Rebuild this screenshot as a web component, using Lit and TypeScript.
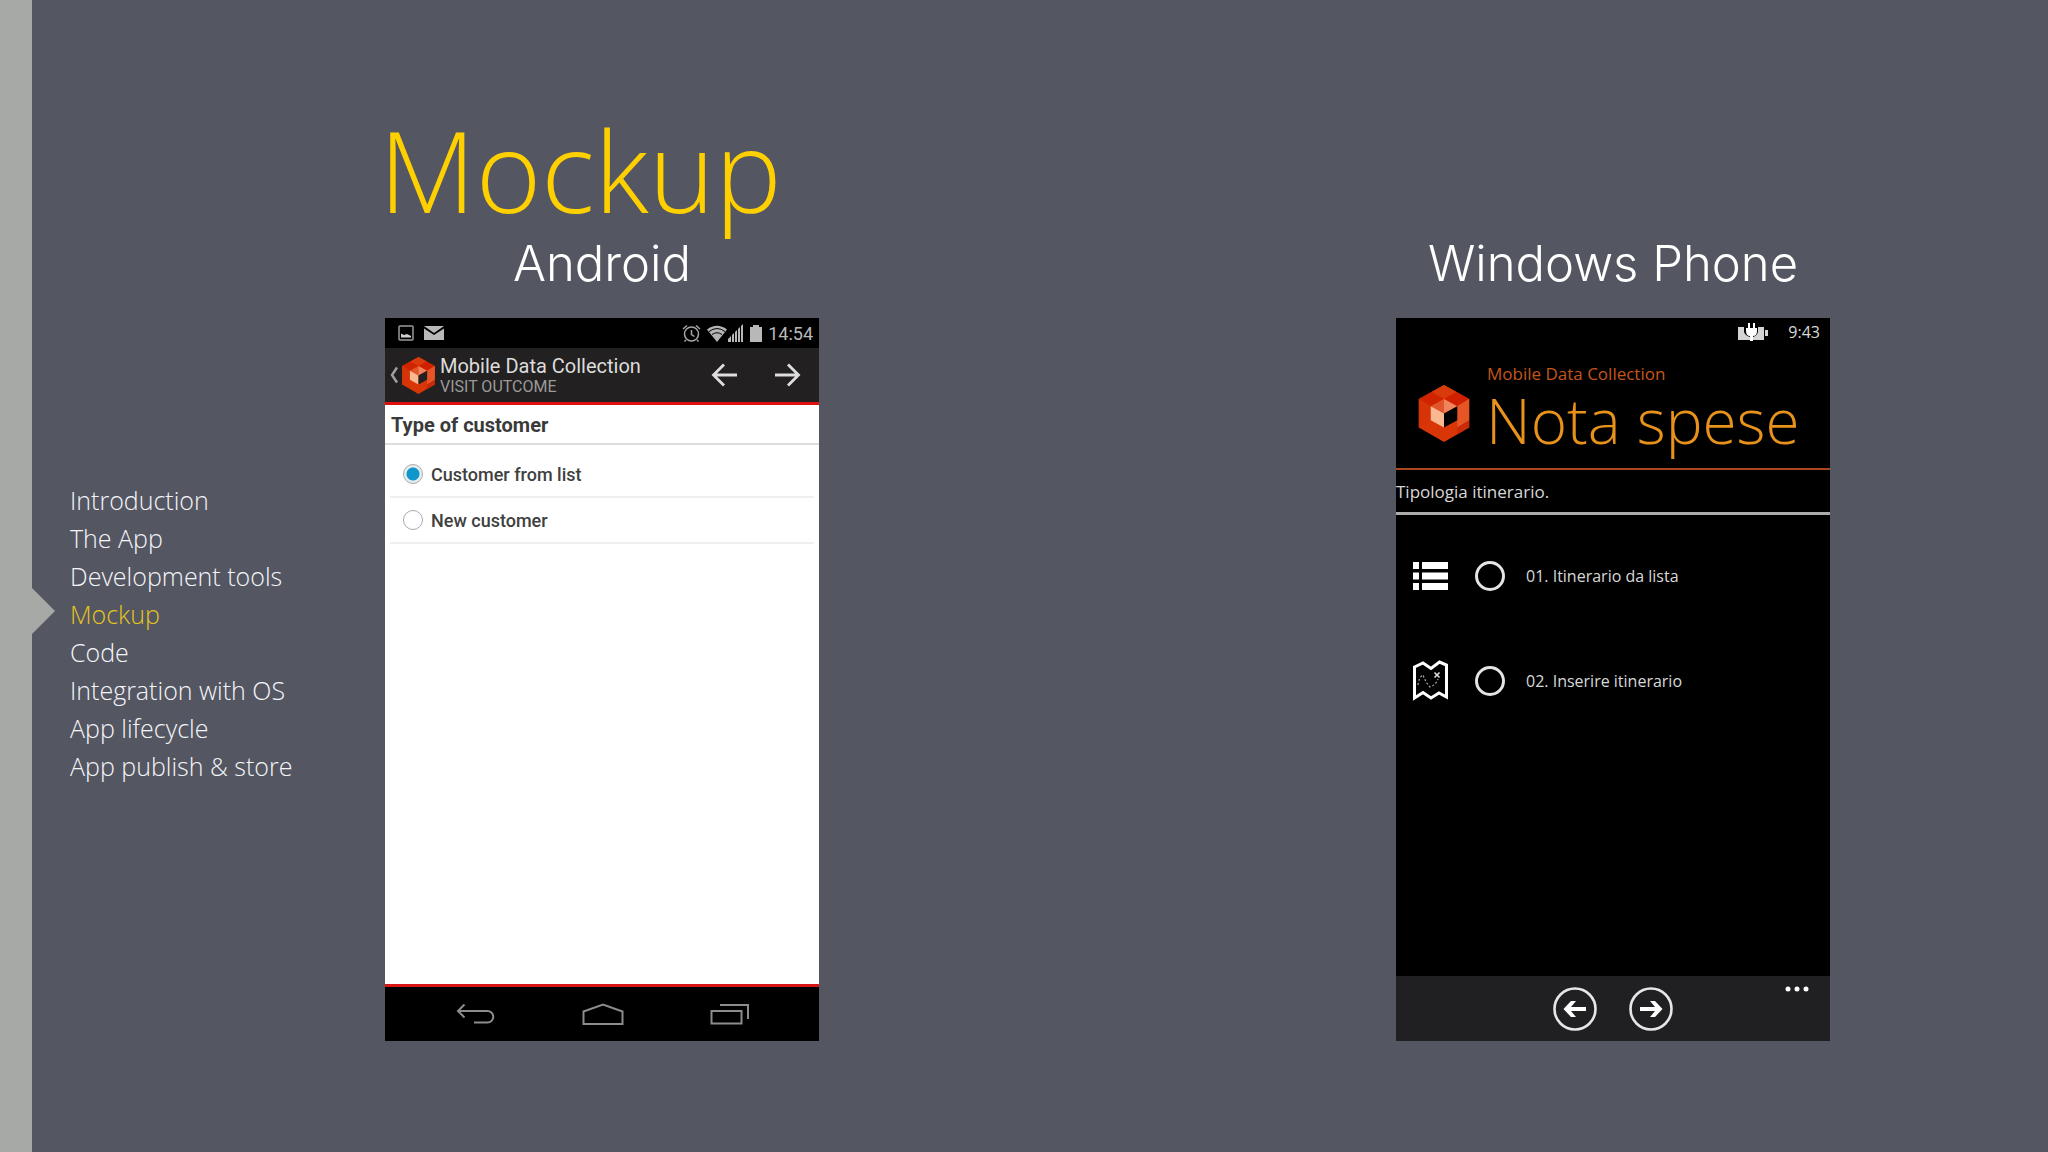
import { LitElement, html, css, svg } from "lit";
import { customElement, property, state } from "lit/decorators.js";
import { classMap } from "lit/directives/class-map.js";

const SECTIONS = [
  "Introduction",
  "The App",
  "Development tools",
  "Mockup",
  "Code",
  "Integration with OS",
  "App lifecycle",
  "App publish & store",
];

const cube = (hole: string) => svg`
  <path d="M38 0 76 21V64L38 86 0 64V21Z" fill="#d93608" />
  <path d="M38 0 57 10.500 38 21 19 10.500Z" fill="#d83a0c" />
  <path d="M57 10.500 76 21 57 32 38 21Z" fill="#d02000" />
  <path d="M19 10.500 38 21 18 32 0 21Z" fill="#d02400" />
  <path d="M0 21 18 32V53L0 64Z" fill="#d63406" />
  <path d="M76 21V53L58 64V32Z" fill="#e65526" />
  <path d="M76 53V64L57 75 58 64Z" fill="#c92a08" />
  <path d="M38 21 18 32 38 43Z" fill="#e2562c" />
  <path d="M38 21 58 32 38 43Z" fill="#f0845c" />
  <path d="M18 32 38 43V64L18 53Z" fill="#fab892" />
  <path d="M58 32V53L38 64V43Z" fill=${hole} />
`;

@customElement("cube-logo")
export class CubeLogo extends LitElement {
  @property() hole = "#000";

  static styles = css`
    :host { display: block; flex: none; }
    svg { display: block; width: 100%; height: 100%; }
  `;

  render() {
    return html`<svg viewBox="0 0 76 86" aria-hidden="true">${cube(this.hole)}</svg>`;
  }
}

@customElement("android-screen")
export class AndroidScreen extends LitElement {
  @state() private choice = 0;

  static styles = css`
    :host {
      display: flex;
      flex-direction: column;
      background: #fff;
      font-family: Roboto, sans-serif;
      font-weight: 400;
    }
    svg { display: block; fill: none; }
    .solid { fill: #b8b8b8; }
    button { border: 0; padding: 0; background: none; color: inherit; }
    .status {
      display: flex;
      align-items: center;
      height: 30px;
      padding: 0 6px 0 13px;
      background: #000;
      color: #b9b9b9;
      font-size: 18px;
    }
    .notices, .signals { display: flex; align-items: center; }
    .notices { gap: 10px; }
    .signals { margin-left: auto; gap: 6px; }
    .pair { display: flex; align-items: center; gap: 1px; }
    .action {
      display: flex;
      align-items: center;
      height: 54px;
      padding: 0 18px 0 5px;
      background: #222020;
      border-bottom: 3px solid #e01010;
      color: #dcdcdc;
    }
    .up { display: flex; align-items: center; }
    .logo { width: 37px; height: 37px; }
    .names { display: flex; flex-direction: column; margin-left: 3px; }
    .app { font-size: 20px; line-height: 22px; }
    .page { font-size: 16px; line-height: 19px; color: #9a9a9a; }
    .steps { display: flex; gap: 36px; margin-left: auto; }
    .heading {
      margin: 0;
      padding: 2px 6px 0;
      font-size: 20px;
      line-height: 36px;
      font-weight: 700;
      color: #3a3a3a;
      border-bottom: 2px solid #dcdedd;
    }
    .options { flex: 1; padding: 7px 5px 0; border-bottom: 3px solid #d81414; }
    .option {
      display: flex;
      align-items: center;
      gap: 8px;
      height: 44px;
      padding-left: 13px;
      border-bottom: 2px solid #eeefef;
      font-size: 18px;
      font-weight: 500;
      color: #404040;
    }
    .option input {
      appearance: none;
      flex: none;
      width: 20px;
      height: 20px;
      margin: 0;
      border: 1px solid #aaa;
      border-radius: 50%;
      background: #fff;
    }
    .option input:checked { background: radial-gradient(circle, #0f96cb 6px, #e6edf1 7px); }
    .keys {
      display: flex;
      align-items: center;
      justify-content: space-between;
      height: 54px;
      padding: 0 69px 0 71px;
      background: #000;
    }
  `;

  render() {
    return html`
      <div class="status">
        <div class="notices">
          <svg width="16" height="16" viewBox="0 0 16 16">
            <rect x="1" y="1" width="14" height="14" rx="1" stroke="#9a9a9a" stroke-width="1.500" />
            <path d="M3 12.500V8.500l3 1.500 3-1 4 2v1.500Z" fill="#d0d0d0" />
          </svg>
          <svg class="solid" width="20" height="16" viewBox="0 0 20 16">
            <path d="M0 1h20L10 8Z" />
            <path d="M0 3.500 10 10 20 3.500V15H0Z" />
          </svg>
        </div>
        <div class="signals">
          <svg width="19" height="19" viewBox="0 0 19 19" stroke="#a4a4a4" stroke-width="1.500">
            <circle cx="9.500" cy="10" r="7" />
            <path d="M9.500 6v4.500l3 2M1 5l4-3.500M18 5l-4-3.500M4 16l-1.500 1.500M15 16l1.500 1.500" />
          </svg>
          <div class="pair">
            <svg width="20" height="17" viewBox="0 0 20 17">
              <path d="M0 4.500Q10-3 20 4.500L10 17Z" fill="#b4b4b4" />
              <path d="M2 6.500q8-6 16 0M5 9.500q5-3.500 10 0" stroke="#000" stroke-width="1" />
            </svg>
            <svg class="solid" width="16" height="18" viewBox="0 0 16 18">
              <path d="M0 18v-3l3-3v6ZM4 18v-7l2-2v9ZM7 18V8l2-2v12ZM10 18V5l2-2v15ZM13 18V2l2-2v18Z" />
            </svg>
          </div>
          <svg class="solid" width="12" height="17" viewBox="0 0 12 17">
            <path d="M0 2h3V0h6v2h3v15H0Z" />
          </svg>
          <span>14:54</span>
        </div>
      </div>
      <div class="action">
        <button class="up" aria-label="Up">
          <svg width="10" height="18" viewBox="0 0 10 18" stroke="#a0a0a0" stroke-width="2.400">
            <path d="M7 1.500 2 9l5 7.500" />
          </svg>
          <cube-logo class="logo" hole="#222020"></cube-logo>
        </button>
        <div class="names">
          <span class="app">Mobile Data Collection</span>
          <span class="page">VISIT OUTCOME</span>
        </div>
        <div class="steps">
          <button aria-label="Previous">
            <svg width="27" height="24" viewBox="0 0 27 24" stroke="#dedede" stroke-width="2.800">
              <path d="M26 12H3M13 1.500 2.500 12 13 22.500" />
            </svg>
          </button>
          <button aria-label="Next">
            <svg width="27" height="24" viewBox="0 0 27 24" stroke="#dedede" stroke-width="2.800">
              <path d="M1 12h23M14 1.500 24.500 12 14 22.500" />
            </svg>
          </button>
        </div>
      </div>
      <h3 class="heading">Type of customer</h3>
      <div class="options">
        ${["Customer from list", "New customer"].map(
          (label, i) => html`
            <label class="option">
              <input
                type="radio"
                name="customer"
                .checked=${this.choice === i}
                @change=${() => (this.choice = i)}
              />
              ${label}
            </label>
          `,
        )}
      </div>
      <div class="keys">
        <button aria-label="Back">
          <svg width="39" height="22" viewBox="0 0 39 22" stroke="#8c8c8c" stroke-width="2">
            <path d="M8.500 1.500 2 8l6.500 6.500M2 8h29.500a5.800 5.800 0 0 1 0 11.600H18" />
          </svg>
        </button>
        <button aria-label="Home">
          <svg width="42" height="22" viewBox="0 0 42 22" stroke="#8c8c8c" stroke-width="2">
            <path d="M1.500 8.500 21 1.500l19.500 7V21h-39Z" />
          </svg>
        </button>
        <button aria-label="Recent apps">
          <svg width="40" height="22" viewBox="0 0 40 22" stroke="#8c8c8c" stroke-width="2">
            <path d="M1.500 8h30v12.500h-30ZM10 2h28v14" />
          </svg>
        </button>
      </div>
    `;
  }
}

@customElement("windows-screen")
export class WindowsScreen extends LitElement {
  static styles = css`
    :host {
      display: flex;
      flex-direction: column;
      background: #000;
      color: #d8d8d8;
      font-family: "Open Sans", "Noto Sans", sans-serif;
      font-weight: 400;
    }
    svg { display: block; fill: none; }
    .solid { fill: #fff; }
    button { border: 0; padding: 0; background: none; color: inherit; }
    .status {
      display: flex;
      align-items: center;
      justify-content: flex-end;
      gap: 20px;
      height: 28px;
      padding-right: 10px;
      font-size: 16px;
    }
    .header {
      display: flex;
      align-items: center;
      gap: 16px;
      height: 118px;
      padding: 4px 0 0 22px;
      border-bottom: 2px solid #a8481c;
    }
    .logo { width: 52px; height: 57px; margin-top: 8px; }
    .app { margin: 0; padding-left: 1px; font-size: 17px; line-height: 22px; color: #c4561c; }
    .page { margin: 0; font-size: 62px; line-height: 70px; font-weight: 300; color: #e8921c; }
    .heading {
      margin: 0;
      padding-top: 2px;
      font-size: 17px;
      line-height: 40px;
      font-weight: 400;
      border-bottom: 3px solid #acacac;
    }
    .options { flex: 1; padding-top: 8px; }
    .option {
      display: grid;
      grid-template-columns: 62px 51px 1fr;
      align-items: center;
      height: 105px;
      padding-left: 17px;
      font-size: 16px;
    }
    .option input {
      appearance: none;
      width: 30px;
      height: 30px;
      margin: 0;
      border: 3px solid #e4e4e4;
      border-radius: 50%;
    }
    .option input:checked { background: radial-gradient(circle, #e4e4e4 6px, transparent 7px); }
    .bar {
      display: grid;
      grid-template-columns: 1fr auto 1fr;
      height: 65px;
      background: #201f22;
    }
    .steps { display: flex; gap: 32px; align-items: center; }
    .more { justify-self: end; align-self: start; padding: 10px 21px; }
  `;

  render() {
    return html`
      <div class="status">
        <svg width="30" height="18" viewBox="0 0 30 18">
          <path d="M0 4h6v4q0 4 6 6v3H0ZM20 4h6v13H15v-3q5-2 5-6ZM27 7h3v6h-3Z" fill="#d4d4d4" />
          <path d="M8 5h11v3q0 5-4 5v5h-3v-5q-4 0-4-5ZM10 0h2v5h-2ZM15 0h2v5h-2Z" fill="#fff" />
        </svg>
        <span>9:43</span>
      </div>
      <div class="header">
        <cube-logo class="logo"></cube-logo>
        <div>
          <p class="app">Mobile Data Collection</p>
          <h3 class="page">Nota spese</h3>
        </div>
      </div>
      <h4 class="heading">Tipologia itinerario.</h4>
      <div class="options">
        <label class="option">
          <svg class="solid" width="35" height="28" viewBox="0 0 35 28">
            <path d="M0 0h6v7H0ZM9 0h26v7H9ZM0 10.500h6v7H0ZM9 10.500h26v7H9ZM0 21h6v7H0ZM9 21h26v7H9Z" />
          </svg>
          <input type="radio" name="route" />
          <span>01. Itinerario da lista</span>
        </label>
        <label class="option">
          <svg width="35" height="41" viewBox="0 0 35 41">
            <path d="M1.500 7 10 3l8 5.500L26.500 2 33.500 5v32L26 33l-8 5-8-5.500L1.500 38Z" stroke="#fff" stroke-width="3" />
            <path d="M5 25q1-8 5-10 3 8 7 12 6-2 8-8" stroke="#aaa" stroke-width="1.200" stroke-dasharray="2 2" />
            <path d="m21.500 12.500 5 5m0-5-5 5" stroke="#ddd" stroke-width="1.600" />
          </svg>
          <input type="radio" name="route" />
          <span>02. Inserire itinerario</span>
        </label>
      </div>
      <div class="bar">
        <div></div>
        <div class="steps">
          <button aria-label="Previous">
            <svg width="44" height="44" viewBox="0 0 44 44">
              <circle cx="22" cy="22" r="20.500" stroke="#e6e6e6" stroke-width="2.600" />
              <path d="M33 20v4H18l5 6h-5L10.500 22 18 14h5l-5 6Z" fill="#fff" />
            </svg>
          </button>
          <button aria-label="Next">
            <svg width="44" height="44" viewBox="0 0 44 44">
              <circle cx="22" cy="22" r="20.500" stroke="#e6e6e6" stroke-width="2.600" />
              <path d="M11 20v4h15l-5 6h5L33.500 22 26 14h-5l5 6Z" fill="#fff" />
            </svg>
          </button>
        </div>
        <button class="more" aria-label="More">
          <svg class="solid" width="24" height="6" viewBox="0 0 24 6">
            <circle cx="3" cy="3" r="2.500" />
            <circle cx="12" cy="3" r="2.500" />
            <circle cx="21" cy="3" r="2.500" />
          </svg>
        </button>
      </div>
    `;
  }
}

@customElement("app-root")
export class AppRoot extends LitElement {
  @state() private current = 3;

  static styles = css`
    :host {
      display: grid;
      grid-template-columns: 32px 353px 1fr;
      min-height: 100vh;
      background: #545761;
      color: #f4f5fa;
      font-family: "Open Sans", "Noto Sans", sans-serif;
      font-weight: 300;
    }
    .rail { background: #a6a9a6; }
    .nav { display: flex; flex-direction: column; padding-top: 481px; }
    .link {
      position: relative;
      padding-left: 38px;
      font-size: 25px;
      line-height: 38px;
      color: inherit;
      text-decoration: none;
    }
    .current { color: #e6c41e; }
    .current::before {
      content: "";
      position: absolute;
      left: 0;
      top: -7px;
      border: 23px solid transparent;
      border-left-color: #a6a9a6;
      border-right: 0;
    }
    .slide { padding: 102px 218px 60px 0; }
    .title {
      width: fit-content;
      margin: 0 0 0 -6px;
      font-size: 112px;
      line-height: 136px;
      font-weight: 300;
      color: #ffd000;
    }
    .phones { display: grid; grid-template-columns: 434px 434px; justify-content: space-between; }
    .phone { display: flex; flex-direction: column; gap: 28px; }
    .platform {
      margin: 0;
      font-family: Inter, "Liberation Sans", sans-serif;
      font-size: 49px;
      line-height: 52px;
      font-weight: 300;
      text-align: center;
      color: #fff;
    }
    .screen { aspect-ratio: 434 / 723; }
  `;

  render() {
    return html`
      <div class="rail"></div>
      <nav class="nav">
        ${SECTIONS.map(
          (name, i) => html`
            <a
              href="#"
              class=${classMap({ link: true, current: i === this.current })}
              @click=${(e: Event) => {
                e.preventDefault();
                this.current = i;
              }}
              >${name}</a
            >
          `,
        )}
      </nav>
      <main class="slide">
        <h1 class="title">Mockup</h1>
        <div class="phones">
          <section class="phone">
            <h2 class="platform">Android</h2>
            <android-screen class="screen"></android-screen>
          </section>
          <section class="phone">
            <h2 class="platform">Windows Phone</h2>
            <windows-screen class="screen"></windows-screen>
          </section>
        </div>
      </main>
    `;
  }
}
